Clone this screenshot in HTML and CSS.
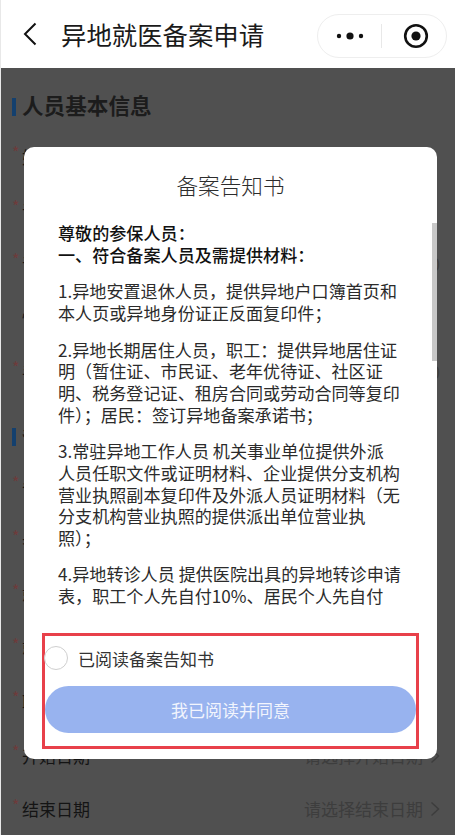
FILE: index.html
```html
<!DOCTYPE html>
<html lang="zh-CN">
<head>
<meta charset="utf-8">
<title>异地就医备案申请</title>
<link rel="stylesheet" href="styles.css">
</head>
<body>
<div class="page">
  <header class="nav">
    <svg class="back" viewBox="0 0 14 24" width="14" height="24"><path d="M12.5 1.5 2 12l10.5 10.5" fill="none" stroke="#111" stroke-width="2"/></svg>
    <h1 class="nav-title">异地就医备案申请</h1>
    <div class="capsule">
      <svg class="dots" viewBox="0 0 28 8" width="28" height="8"><circle cx="3" cy="4" r="2.2" fill="#111"/><circle cx="14" cy="4" r="3.6" fill="#111"/><circle cx="25" cy="4" r="2.2" fill="#111"/></svg>
      <span class="capsule-line"></span>
      <svg class="target" viewBox="0 0 26 26" width="26" height="26"><circle cx="13" cy="13" r="10.8" fill="none" stroke="#111" stroke-width="2.6"/><circle cx="13" cy="13" r="4.6" fill="#111"/></svg>
    </div>
  </header>

  <main class="form">
    <h2 class="section-title">人员基本信息</h2>
    <div class="row"><span class="label">姓名</span></div>
    <div class="row"><span class="label">证件类型</span></div>
    <div class="row"><span class="label">证件号码</span><span class="value">0</span></div>
    <div class="row row-plain"><span class="label">性别</span></div>
    <div class="row"><span class="label">手机号码</span><span class="value">0</span></div>
    <h2 class="section-title">备案信息</h2>
    <div class="row"><span class="label">备案类型</span></div>
    <div class="row"><span class="label">参保地</span></div>
    <div class="row"><span class="label">就医地</span></div>
    <div class="row"><span class="label">就医医院</span></div>
    <div class="row"><span class="label">联系地址</span></div>
    <div class="row"><span class="label">开始日期</span><span class="value">请选择开始日期<svg class="chev" viewBox="0 0 10 16" width="10" height="16"><path d="M1.5 1.5 8.5 8l-7 6.500" fill="none" stroke="#3d3d3d" stroke-width="1.500"/></svg></span></div>
    <div class="row"><span class="label">结束日期</span><span class="value">请选择结束日期<svg class="chev" viewBox="0 0 10 16" width="10" height="16"><path d="M1.5 1.5 8.5 8l-7 6.500" fill="none" stroke="#3d3d3d" stroke-width="1.500"/></svg></span></div>
  </main>

  <section class="modal">
    <h3 class="modal-title">备案告知书</h3>
    <div class="notice">
      <span class="scrollbar"></span>
      <p class="lead">尊敬的参保人员：<br>一、符合备案人员及需提供材料：</p>
      <p>1.异地安置退休人员，提供异地户口簿首页和本人页或异地身份证正反面复印件；</p>
      <p>2.异地长期居住人员，职工：提供异地居住证明（暂住证、市民证、老年优待证、社区证明、税务登记证、租房合同或劳动合同等复印件）；居民：签订异地备案承诺书；</p>
      <p>3.常驻异地工作人员 机关事业单位提供外派<br>人员任职文件或证明材料、企业提供分支机构<br>营业执照副本复印件及外派人员证明材料（无<br>分支机构营业执照的提供派出单位营业执<br>照）；</p>
      <p>4.异地转诊人员 提供医院出具的异地转诊申请表，职工个人先自付10%、居民个人先自付</p>
    </div>
    <div class="confirm">
      <label class="check"><span class="radio"></span><span>已阅读备案告知书</span></label>
      <div class="agree">我已阅读并同意</div>
    </div>
  </section>
</div>
</body>
</html>
```
FILE: styles.css
```css
* { box-sizing: border-box; }
html, body { margin: 0; padding: 0; }
body {
  width: 455px;
  height: 835px;
  overflow: hidden;
  background: #fff;
  font-family: "Noto Sans CJK SC", "Noto Sans", sans-serif;
  color: #111;
}
.page {
  position: relative;
  width: 455px;
  height: 835px;
  overflow: hidden;
  background: #505050;
  border-left: 1px solid #e8e8e8;
}
.nav {
  display: flex;
  align-items: center;
  height: 68px;
  background: #fff;
  margin-left: -1px;
  padding: 0 8px 0 23px;
}
.back { flex: none; }
.nav-title {
  margin: 0 0 0 24px;
  font-size: 25.4px;
  font-weight: 400;
  line-height: 34px;
  color: #1a1a1a;
  white-space: nowrap;
}
.capsule {
  margin-left: auto;
  display: flex;
  align-items: center;
  width: 130px;
  height: 44px;
  border: 1px solid #eeeeee;
  border-radius: 22px;
  margin-top: 3px;
  padding-left: 18px;
}
.dots { flex: none; }
.capsule-line {
  width: 1px;
  height: 24px;
  margin-left: 17px;
  background: #e8e8e8;
}
.target { margin-left: 21px; flex: none; }
.form { padding: 0 15px 0 11px; }
.section-title {
  position: relative;
  display: flex;
  align-items: flex-end;
  height: 62px;
  margin: 0;
  padding: 0 0 10px 10px;
  font-size: 21.6px;
  line-height: 30px;
  font-weight: 700;
  color: #1c1c1c;
  white-space: nowrap;
}
.section-title::before {
  content: "";
  position: absolute;
  left: 0;
  bottom: 14px;
  width: 4px;
  height: 18px;
  background: #14406e;
}
.row {
  display: flex;
  justify-content: space-between;
  align-items: center;
  height: 53.7px;
  padding-left: 10px;
  font-size: 17px;
  line-height: 22px;
  position: relative;
}
.row::before {
  content: "*";
  position: absolute;
  left: 0;
  top: 11px;
  font-size: 16px;
  color: #6e3b3b;
}
.row-plain::before { content: none; }
.label { color: #141414; }
.value {
  display: flex;
  align-items: center;
  gap: 7px;
  color: #3d3d3d;
}
.chev { flex: none; }
.modal {
  position: absolute;
  left: 23px;
  top: 147px;
  width: 413px;
  height: 612px;
  display: flex;
  flex-direction: column;
  background: #fff;
  border-radius: 10px;
  overflow: hidden;
}
.modal-title {
  flex: none;
  margin: 0;
  padding-top: 23px;
  height: 75px;
  font-size: 21.6px;
  line-height: 30px;
  font-weight: 300;
  text-align: center;
  color: #2c2c2c;
}
.notice {
  position: relative;
  flex: none;
  height: 390px;
  padding: 0 34px;
  overflow: hidden;
  font-size: 17.1px;
  line-height: 21.6px;
  font-weight: 400;
  color: #2b2b2b;
}
.notice p { margin: 0 0 15.2px; }
.notice .lead { font-weight: 500; color: #111; }
.scrollbar {
  position: absolute;
  right: 0;
  top: 1px;
  width: 5px;
  height: 138px;
  background: #c8c8c8;
}
.confirm {
  flex: none;
  width: 377px;
  height: 116px;
  margin: 21px 0 0 18px;
  padding: 3px;
  border: 3px solid #e8404a;
}
.check {
  display: flex;
  align-items: center;
  height: 38px;
  font-size: 17px;
  color: #333;
  gap: 10px;
  margin-left: -4px;
}
.radio {
  width: 24px;
  height: 24px;
  border: 1px solid #cfcfcf;
  border-radius: 50%;
  background: #fff;
}
.agree {
  height: 47px;
  margin: 9px -3px 0;
  border-radius: 24px;
  background: #98b3ef;
  color: #f2f5fd;
  font-size: 17px;
  line-height: 47px;
  text-align: center;
}
```
